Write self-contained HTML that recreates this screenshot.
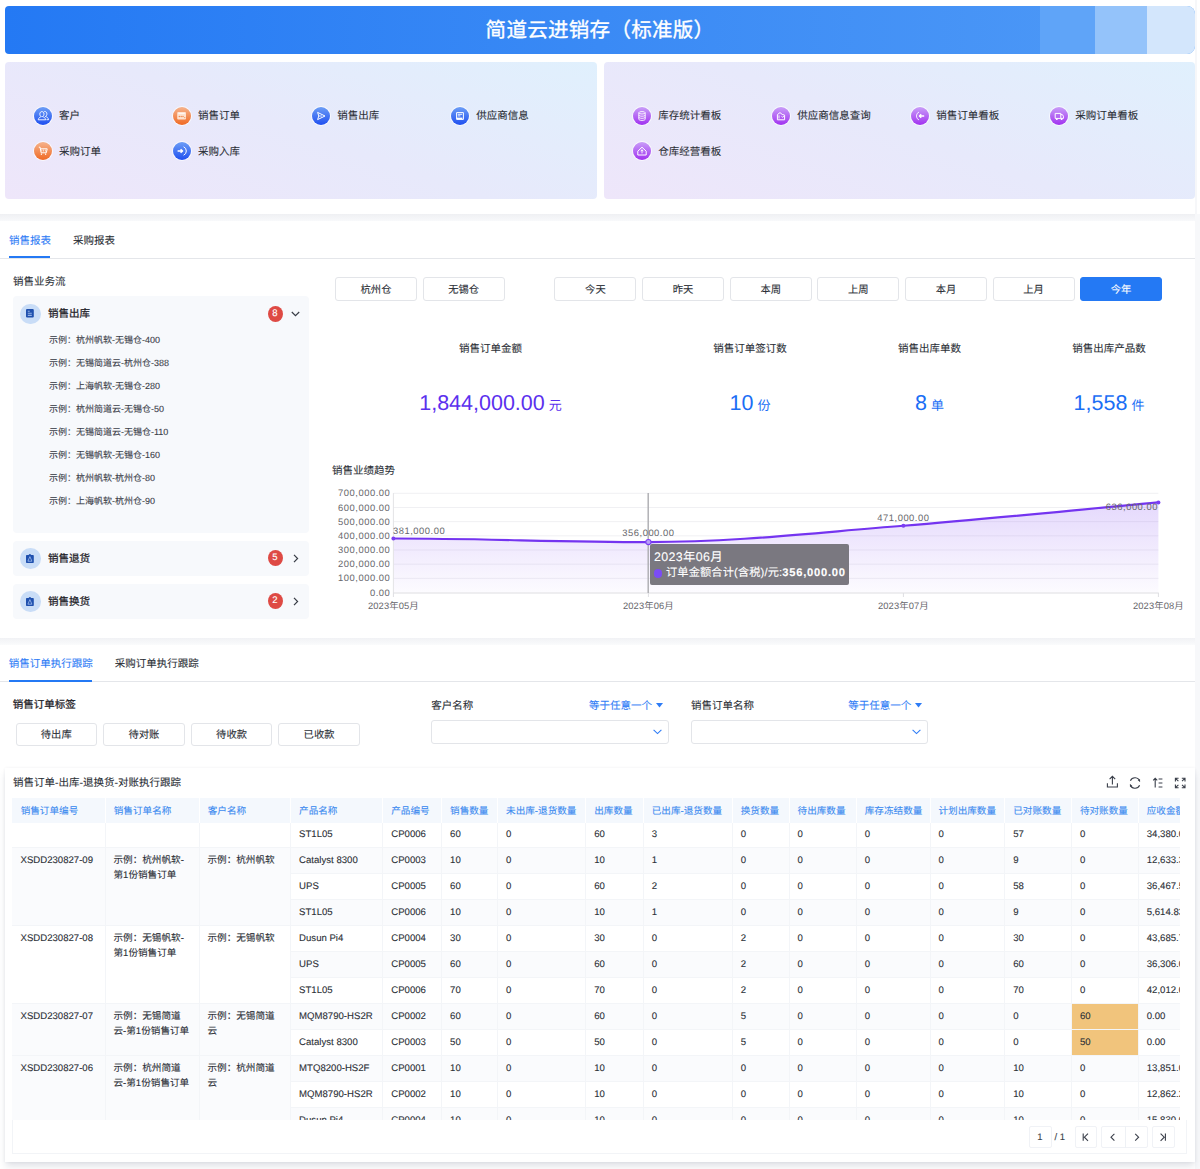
<!DOCTYPE html>
<html lang="zh-CN"><head><meta charset="utf-8"><style>
*{box-sizing:border-box;margin:0;padding:0}
html,body{width:1200px;height:1169px;overflow:hidden;background:#fff}
body{font-family:"Liberation Sans",sans-serif;color:#1f2329;text-rendering:geometricPrecision;position:relative;-webkit-text-stroke:.1px currentColor}
.ab{position:absolute;white-space:nowrap}
.t{position:absolute;white-space:nowrap;line-height:1}
.btn{position:absolute;height:24px;border:1px solid #e3e5e9;border-radius:3px;background:#fff;font-size:10.3px;color:#2b2f36;text-align:center;line-height:22px;padding-top:1.4px}
.qi{position:absolute;width:18px;height:18px;border-radius:50%;box-shadow:0 0 0 1px rgba(255,255,255,.7)}
.qi svg{position:absolute;left:0;top:0}
.ql{position:absolute;font-size:10.5px;color:#2b2f36;line-height:12px;white-space:nowrap}
.blue{background:linear-gradient(180deg,#6d9ef6,#1f4ff0)}
.orange{background:linear-gradient(180deg,#f6b38c,#f06a24)}
.purple{background:linear-gradient(180deg,#c99ef8,#a132f0)}
</style></head><body>
<div class="ab" style="left:5px;top:6px;width:1190px;height:48px;border-radius:4px 8px 8px 4px;overflow:hidden;background:linear-gradient(90deg,#2479f4 0%,#3a8af5 50%,#4f9af7 100%)"><div class="ab" style="left:1035px;top:0;width:55px;height:48px;background:#5fa4f8"></div><div class="ab" style="left:1090px;top:0;width:52px;height:48px;background:#94c3fa"></div><div class="ab" style="left:1142px;top:0;width:48px;height:48px;background:#d3e6fc"></div></div><div class="t" style="left:0;width:1200px;text-align:center;top:20.5px;font-size:20.5px;color:#fff;letter-spacing:0.3px;-webkit-text-stroke:.35px #fff">简道云进销存（标准版）</div><div class="ab" style="left:5px;top:62px;width:592px;height:137px;border-radius:4px;background:linear-gradient(20deg,#eee6fa 0%,#e7e9fb 50%,#e0f0fd 100%)"></div><div class="ab" style="left:604px;top:62px;width:591px;height:137px;border-radius:4px;background:linear-gradient(20deg,#eee6fa 0%,#e7e9fb 50%,#e0f0fd 100%)"></div><div class="qi blue" style="left:33.6px;top:106.5px"><svg width="18" height="18" viewBox="0 0 18 18"><path d="M7.4 9.6c-1.2-.5-1.6-1.5-1.6-2.6 0-1.4.9-2.4 2.1-2.4s2.1 1 2.1 2.4c0 1.1-.4 2.1-1.6 2.6 1.9.4 2.9 1.4 3.3 3.2H4.2c.4-1.8 1.4-2.8 3.2-3.2z" fill="none" stroke="#fff" stroke-width=".9" stroke-linejoin="round"/><path d="M9.9 4.7c.3-.2.6-.2.9-.2 1.2 0 2.1 1 2.1 2.4 0 1.1-.4 2.1-1.6 2.6 1.9.4 2.9 1.4 3.3 3.2h-2.1" fill="none" stroke="#fff" stroke-width=".9" stroke-linejoin="round"/></svg></div><div class="ql" style="left:59.1px;top:109.5px">客户</div><div class="qi orange" style="left:172.6px;top:106.5px"><svg width="18" height="18" viewBox="0 0 18 18"><rect x="4.2" y="5" width="8.8" height="7.4" rx="1" fill="#fde2d0"/><path d="M5.4 6.4h6.4" stroke="#fff" stroke-width=".8"/><circle cx="6.3" cy="9.6" r=".75" fill="#f08a4e"/><circle cx="8.2" cy="9.6" r=".75" fill="#f08a4e"/><circle cx="10" cy="9.6" r=".75" fill="#f08a4e"/><circle cx="11.8" cy="10.6" r=".6" fill="#f08a4e"/></svg></div><div class="ql" style="left:198.1px;top:109.5px">销售订单</div><div class="qi blue" style="left:311.7px;top:106.5px"><svg width="18" height="18" viewBox="0 0 18 18"><path d="M5.6 5.4 13 9 5.6 12.6 6.8 9z" fill="none" stroke="#fff" stroke-width="1" stroke-linejoin="round"/><path d="M6.8 9H10" stroke="#fff" stroke-width=".8"/></svg></div><div class="ql" style="left:337.2px;top:109.5px">销售出库</div><div class="qi blue" style="left:450.7px;top:106.5px"><svg width="18" height="18" viewBox="0 0 18 18"><path d="M5.6 5.6h6.8v6.8H5.6z" fill="none" stroke="#fff" stroke-width="1" stroke-linejoin="round"/><path d="M6.8 7.3h4.4M6.8 8.9h2.6" stroke="#fff" stroke-width=".9"/><path d="M5.8 10.6h5.6v1.6H5.8z" fill="#fff"/></svg></div><div class="ql" style="left:476.2px;top:109.5px">供应商信息</div><div class="qi orange" style="left:33.6px;top:142px"><svg width="18" height="18" viewBox="0 0 18 18"><path d="M4.8 5.2h1.3l1 5.6h5.2l.9-4H6.6" fill="none" stroke="#fff" stroke-width="1" stroke-linejoin="round"/><path d="M7.8 7.6v2M9.6 7.6v2M11.4 7.6v2" stroke="#fff" stroke-width=".7"/><rect x="6.8" y="11.6" width="1.2" height="1.2" fill="#fff"/><rect x="11" y="11.6" width="1.2" height="1.2" fill="#fff"/></svg></div><div class="ql" style="left:59.1px;top:145.7px">采购订单</div><div class="qi blue" style="left:172.6px;top:142px"><svg width="18" height="18" viewBox="0 0 18 18"><path d="M4.6 9h4.6M7.6 7.2 9.6 9l-2 1.8" fill="none" stroke="#fff" stroke-width="1.4" stroke-linejoin="round"/><path d="M10.6 4.8a4.6 4.6 0 0 1 0 8.4" fill="none" stroke="#fff" stroke-width="1"/></svg></div><div class="ql" style="left:198.1px;top:145.7px">采购入库</div><div class="qi purple" style="left:632.7px;top:106.5px"><svg width="18" height="18" viewBox="0 0 18 18"><ellipse cx="9" cy="5.8" rx="3.2" ry="1.2" fill="none" stroke="#fff" stroke-width=".9"/><path d="M5.8 5.8v6.4c0 .7 1.4 1.2 3.2 1.2s3.2-.5 3.2-1.2V5.8M5.8 8c0 .7 1.4 1.2 3.2 1.2s3.2-.5 3.2-1.2M5.8 10.1c0 .7 1.4 1.2 3.2 1.2s3.2-.5 3.2-1.2" fill="none" stroke="#fff" stroke-width=".9"/></svg></div><div class="ql" style="left:658.2px;top:109.5px">库存统计看板</div><div class="qi purple" style="left:771.7px;top:106.5px"><svg width="18" height="18" viewBox="0 0 18 18"><path d="M5.4 12.8V7.6l2.6-2 2.2 1.8 2.4.7v4.7z" fill="none" stroke="#fff" stroke-width="1" stroke-linejoin="round"/><path d="M7 8.4v3.2M9.6 9.4l1 1 1.2-1.4" fill="none" stroke="#fff" stroke-width=".9"/></svg></div><div class="ql" style="left:797.2px;top:109.5px">供应商信息查询</div><div class="qi purple" style="left:910.7px;top:106.5px"><svg width="18" height="18" viewBox="0 0 18 18"><path d="M13.2 9H8.6M10.2 7.2 8.4 9l1.8 1.8" fill="none" stroke="#fff" stroke-width="1.4" stroke-linejoin="round"/><path d="M8 5a4.4 4.4 0 0 0 0 8" fill="none" stroke="#fff" stroke-width="1" opacity=".85"/></svg></div><div class="ql" style="left:936.2px;top:109.5px">销售订单看板</div><div class="qi purple" style="left:1049.7px;top:106.5px"><svg width="18" height="18" viewBox="0 0 18 18"><path d="M5.2 6.4h5.6v5H5.2zM10.8 7.6h1.6l1 1.6v2.2h-2.6" fill="none" stroke="#fff" stroke-width="1" stroke-linejoin="round"/><circle cx="6.8" cy="12.2" r=".9" fill="#fff"/><circle cx="11.6" cy="12.2" r=".9" fill="#fff"/></svg></div><div class="ql" style="left:1075.2px;top:109.5px">采购订单看板</div><div class="qi purple" style="left:632.7px;top:142px"><svg width="18" height="18" viewBox="0 0 18 18"><path d="M4.8 9.2 9 5.2l4.2 4v3.8H4.8z" fill="none" stroke="#fff" stroke-width="1" stroke-linejoin="round"/><path d="M9 7.8v3.6M7.8 9.2 9 7.8l1.2 1.4" fill="none" stroke="#fff" stroke-width=".9"/></svg></div><div class="ql" style="left:658.2px;top:145.7px">仓库经营看板</div><div class="ab" style="left:1195px;top:0;width:1.5px;height:214px;background:#f6f7f9"></div><div class="ab" style="left:0;top:214px;width:1195px;height:7px;background:linear-gradient(180deg,#eff0f3,#f8f9fb)"></div><div class="ab" style="left:1195px;top:214px;width:5px;height:955px;background:#f7f8fa"></div><div class="ab" style="left:0;top:637.5px;width:1195px;height:7.5px;background:linear-gradient(180deg,#f1f2f5,#fafbfc)"></div><div class="t" style="left:9px;top:236px;font-size:10.5px;color:#2e7cf6">销售报表</div><div class="t" style="left:73px;top:236px;font-size:10.5px;color:#2b2f36">采购报表</div><div class="ab" style="left:0;top:258px;width:1195px;height:1px;background:#e4e6ea"></div><div class="ab" style="left:9px;top:256px;width:41px;height:2px;background:#2479f4"></div><div class="t" style="left:13px;top:277px;font-size:10.5px;color:#2b2f36">销售业务流</div><div class="ab" style="left:12.5px;top:296.3px;width:296.5px;height:236.7px;border-radius:4px;background:#f7f9fc"></div><div class="ab" style="left:19.9px;top:303.7px;width:20.7px;height:20.7px;border-radius:50%;background:#c9ddf7"></div><div class="ab" style="left:26.2px;top:309.4px;width:8px;height:9px;line-height:0"><svg width="8" height="9" viewBox="0 0 8 9"><rect x="0" y="0" width="7.8" height="8.6" rx="1.1" fill="#1f50ae"/><path d="M1.8 2.2h1.9M1.8 4.3h4M1.8 6.4h4" stroke="#93b2e8" stroke-width="1.1"/></svg></div><div class="t" style="left:48px;top:309.2px;font-size:10.5px;color:#1f2329;-webkit-text-stroke:.28px #1f2329">销售出库</div><div class="ab" style="left:267.5px;top:306px;width:15px;height:16px;border-radius:50%;background:#de4a44;color:#fff;font-size:9.5px;text-align:center;line-height:16px">8</div><svg class="ab" style="left:291px;top:311px" width="9" height="6" viewBox="0 0 9 6"><path d="M.8 1 4.5 4.6 8.2 1" fill="none" stroke="#373c45" stroke-width="1.2"/></svg><div class="t" style="left:49px;top:335.7px;font-size:9px;color:#3b4049">示例：杭州帆软-无锡仓-400</div><div class="t" style="left:49px;top:358.8px;font-size:9px;color:#3b4049">示例：无锡简道云-杭州仓-388</div><div class="t" style="left:49px;top:381.9px;font-size:9px;color:#3b4049">示例：上海帆软-无锡仓-280</div><div class="t" style="left:49px;top:404.9px;font-size:9px;color:#3b4049">示例：杭州简道云-无锡仓-50</div><div class="t" style="left:49px;top:428.0px;font-size:9px;color:#3b4049">示例：无锡简道云-无锡仓-110</div><div class="t" style="left:49px;top:451.1px;font-size:9px;color:#3b4049">示例：无锡帆软-无锡仓-160</div><div class="t" style="left:49px;top:474.2px;font-size:9px;color:#3b4049">示例：杭州帆软-杭州仓-80</div><div class="t" style="left:49px;top:497.3px;font-size:9px;color:#3b4049">示例：上海帆软-杭州仓-90</div><div class="ab" style="left:12.5px;top:540.7px;width:296.5px;height:35.3px;border-radius:4px;background:#f7f9fc"></div><div class="ab" style="left:19.9px;top:548.1px;width:20.7px;height:20.7px;border-radius:50%;background:#c9ddf7"></div><div class="ab" style="left:26.2px;top:553.8px;width:8px;height:9px;line-height:0"><svg width="8" height="9" viewBox="0 0 8 9"><path d="M1 .9h1.6C3 .3 3.5 0 3.9 0s.9.3 1.3.9h1.6c.6 0 1 .4 1 1v6c0 .6-.4 1-1 1H1c-.6 0-1-.4-1-1v-6c0-.6.4-1 1-1z" fill="#1f50ae"/><path d="M3.9 2.6 5.9 7.2H1.9z" fill="none" stroke="#93b2e8" stroke-width=".9"/></svg></div><div class="t" style="left:48px;top:553.6px;font-size:10.5px;color:#1f2329;-webkit-text-stroke:.28px #1f2329">销售退货</div><div class="ab" style="left:267.5px;top:550.4px;width:15px;height:16px;border-radius:50%;background:#de4a44;color:#fff;font-size:9.5px;text-align:center;line-height:16px">5</div><svg class="ab" style="left:293px;top:553.9px" width="6" height="9" viewBox="0 0 6 9"><path d="M1 .8 4.6 4.5 1 8.2" fill="none" stroke="#373c45" stroke-width="1.2"/></svg><div class="ab" style="left:12.5px;top:583.7px;width:296.5px;height:35.3px;border-radius:4px;background:#f7f9fc"></div><div class="ab" style="left:19.9px;top:591.1px;width:20.7px;height:20.7px;border-radius:50%;background:#c9ddf7"></div><div class="ab" style="left:26.2px;top:596.8px;width:8px;height:9px;line-height:0"><svg width="8" height="9" viewBox="0 0 8 9"><path d="M1 .9h1.6C3 .3 3.5 0 3.9 0s.9.3 1.3.9h1.6c.6 0 1 .4 1 1v6c0 .6-.4 1-1 1H1c-.6 0-1-.4-1-1v-6c0-.6.4-1 1-1z" fill="#1f50ae"/><path d="M3.9 2.6 5.9 7.2H1.9z" fill="none" stroke="#93b2e8" stroke-width=".9"/></svg></div><div class="t" style="left:48px;top:596.6px;font-size:10.5px;color:#1f2329;-webkit-text-stroke:.28px #1f2329">销售换货</div><div class="ab" style="left:267.5px;top:593.4px;width:15px;height:16px;border-radius:50%;background:#de4a44;color:#fff;font-size:9.5px;text-align:center;line-height:16px">2</div><svg class="ab" style="left:293px;top:596.9px" width="6" height="9" viewBox="0 0 6 9"><path d="M1 .8 4.6 4.5 1 8.2" fill="none" stroke="#373c45" stroke-width="1.2"/></svg><div class="btn" style="left:335px;top:277.4px;width:82px">杭州仓</div><div class="btn" style="left:422.6px;top:277.4px;width:82px">无锡仓</div><div class="btn" style="left:554.4px;top:277.4px;width:82px">今天</div><div class="btn" style="left:642px;top:277.4px;width:82px">昨天</div><div class="btn" style="left:729.7px;top:277.4px;width:82px">本周</div><div class="btn" style="left:817.3px;top:277.4px;width:82px">上周</div><div class="btn" style="left:905px;top:277.4px;width:82px">本月</div><div class="btn" style="left:992.6px;top:277.4px;width:82px">上月</div><div class="btn" style="left:1080px;top:277.4px;width:82px;background:#2479f4;border-color:#2479f4;color:#fff">今年</div><div class="t" style="left:390.5px;width:200px;text-align:center;top:344px;font-size:10.5px;color:#2b2f36">销售订单金额</div><div class="t" style="left:340.5px;width:300px;text-align:center;top:393px;font-size:21.5px;color:#5b30ee;-webkit-text-stroke:0">1,844,000.00<span style="font-size:13px;margin-left:4px">元</span></div><div class="t" style="left:650px;width:200px;text-align:center;top:344px;font-size:10.5px;color:#2b2f36">销售订单签订数</div><div class="t" style="left:600px;width:300px;text-align:center;top:393px;font-size:21.5px;color:#1a6ef5;-webkit-text-stroke:0">10<span style="font-size:13px;margin-left:4px">份</span></div><div class="t" style="left:829.5px;width:200px;text-align:center;top:344px;font-size:10.5px;color:#2b2f36">销售出库单数</div><div class="t" style="left:779.5px;width:300px;text-align:center;top:393px;font-size:21.5px;color:#1a6ef5;-webkit-text-stroke:0">8<span style="font-size:13px;margin-left:4px">单</span></div><div class="t" style="left:1009px;width:200px;text-align:center;top:344px;font-size:10.5px;color:#2b2f36">销售出库产品数</div><div class="t" style="left:959px;width:300px;text-align:center;top:393px;font-size:21.5px;color:#1a6ef5;-webkit-text-stroke:0">1,558<span style="font-size:13px;margin-left:4px">件</span></div><div class="t" style="left:332px;top:466px;font-size:10.5px;color:#2b2f36">销售业绩趋势</div><svg class="ab" style="left:0;top:0" width="1200" height="640" viewBox="0 0 1200 640"><defs><linearGradient id="ag" x1="0" y1="0" x2="0" y2="1"><stop offset="0" stop-color="#7b3ff2" stop-opacity=".2"/><stop offset="1" stop-color="#7b3ff2" stop-opacity=".02"/></linearGradient></defs><line x1="393.4" y1="578.33" x2="1158.4" y2="578.33" stroke="#f0f0f3" stroke-width="1"/><line x1="393.4" y1="564.16" x2="1158.4" y2="564.16" stroke="#f0f0f3" stroke-width="1"/><line x1="393.4" y1="549.99" x2="1158.4" y2="549.99" stroke="#f0f0f3" stroke-width="1"/><line x1="393.4" y1="535.82" x2="1158.4" y2="535.82" stroke="#f0f0f3" stroke-width="1"/><line x1="393.4" y1="521.65" x2="1158.4" y2="521.65" stroke="#f0f0f3" stroke-width="1"/><line x1="393.4" y1="507.48" x2="1158.4" y2="507.48" stroke="#f0f0f3" stroke-width="1"/><line x1="393.4" y1="493.31" x2="1158.4" y2="493.31" stroke="#f0f0f3" stroke-width="1"/><path d="M393.4,538.51 C482.6,538.51 559.1,542.05 648.4,542.05 C737.6,542.05 814.1,532.70 903.4,525.76 C992.6,518.82 1069.2,510.56 1158.4,502.38 L1158.4,592.5 L393.4,592.5 Z" fill="url(#ag)"/><line x1="393.4" y1="493" x2="393.4" y2="593" stroke="#e3e3e6" stroke-width="1"/><line x1="393" y1="593" x2="1158.8" y2="593" stroke="#dedee2" stroke-width="1.2"/><line x1="393.4" y1="593" x2="393.4" y2="597" stroke="#dedee2" stroke-width="1"/><line x1="648.4" y1="593" x2="648.4" y2="597" stroke="#dedee2" stroke-width="1"/><line x1="903.4" y1="593" x2="903.4" y2="597" stroke="#dedee2" stroke-width="1"/><line x1="1158.4" y1="593" x2="1158.4" y2="597" stroke="#dedee2" stroke-width="1"/><line x1="648.2" y1="493" x2="648.2" y2="593" stroke="#acacb0" stroke-width="1.4"/><path d="M393.4,538.51 C482.6,538.51 559.1,542.05 648.4,542.05 C737.6,542.05 814.1,532.70 903.4,525.76 C992.6,518.82 1069.2,510.56 1158.4,502.38" fill="none" stroke="#7434f0" stroke-width="2.2"/><circle cx="393.4" cy="538.51" r="2" fill="#7b3ff2"/><circle cx="903.4" cy="525.76" r="2" fill="#7b3ff2"/><circle cx="1158.4" cy="502.38" r="2" fill="#7b3ff2"/><circle cx="648.4" cy="542.05" r="2.6" fill="#b9a0f7" stroke="#7b3ff2" stroke-width="1.1"/></svg><div class="t" style="left:290.3px;width:100px;text-align:right;top:587.5px;font-size:9.4px;letter-spacing:.53px;color:#66666b;-webkit-text-stroke:0">0.00</div><div class="t" style="left:290.3px;width:100px;text-align:right;top:573.3px;font-size:9.4px;letter-spacing:.53px;color:#66666b;-webkit-text-stroke:0">100,000.00</div><div class="t" style="left:290.3px;width:100px;text-align:right;top:559.2px;font-size:9.4px;letter-spacing:.53px;color:#66666b;-webkit-text-stroke:0">200,000.00</div><div class="t" style="left:290.3px;width:100px;text-align:right;top:545.0px;font-size:9.4px;letter-spacing:.53px;color:#66666b;-webkit-text-stroke:0">300,000.00</div><div class="t" style="left:290.3px;width:100px;text-align:right;top:530.8px;font-size:9.4px;letter-spacing:.53px;color:#66666b;-webkit-text-stroke:0">400,000.00</div><div class="t" style="left:290.3px;width:100px;text-align:right;top:516.6px;font-size:9.4px;letter-spacing:.53px;color:#66666b;-webkit-text-stroke:0">500,000.00</div><div class="t" style="left:290.3px;width:100px;text-align:right;top:502.5px;font-size:9.4px;letter-spacing:.53px;color:#66666b;-webkit-text-stroke:0">600,000.00</div><div class="t" style="left:290.3px;width:100px;text-align:right;top:488.3px;font-size:9.4px;letter-spacing:.53px;color:#66666b;-webkit-text-stroke:0">700,000.00</div><div class="t" style="left:353.4px;width:80px;text-align:center;top:601.2px;font-size:9.4px;letter-spacing:.1px;color:#66666b;-webkit-text-stroke:0">2023年05月</div><div class="t" style="left:608.4px;width:80px;text-align:center;top:601.2px;font-size:9.4px;letter-spacing:.1px;color:#66666b;-webkit-text-stroke:0">2023年06月</div><div class="t" style="left:863.4px;width:80px;text-align:center;top:601.2px;font-size:9.4px;letter-spacing:.1px;color:#66666b;-webkit-text-stroke:0">2023年07月</div><div class="t" style="left:1118.4px;width:80px;text-align:center;top:601.2px;font-size:9.4px;letter-spacing:.1px;color:#66666b;-webkit-text-stroke:0">2023年08月</div><div class="t" style="left:393px;top:526px;font-size:9.4px;letter-spacing:.53px;color:#66666b;-webkit-text-stroke:0">381,000.00</div><div class="t" style="left:598.4px;width:100px;text-align:center;top:527.8px;font-size:9.4px;letter-spacing:.53px;color:#66666b;-webkit-text-stroke:0">356,000.00</div><div class="t" style="left:853.4px;width:100px;text-align:center;top:513px;font-size:9.4px;letter-spacing:.53px;color:#66666b;-webkit-text-stroke:0">471,000.00</div><div class="t" style="left:1058px;width:100px;text-align:right;top:501.8px;font-size:9.4px;letter-spacing:.53px;color:#66666b;-webkit-text-stroke:0">636,000.00</div><div class="ab" style="left:650.3px;top:544.2px;width:198.5px;height:40.5px;border-radius:2px;background:#7a7880"></div><div class="t" style="left:654px;top:550.5px;font-size:12.4px;letter-spacing:.35px;color:#fff">2023年06月</div><div class="ab" style="left:653.7px;top:569px;width:8.6px;height:8.6px;border-radius:50%;background:#7b4cf5"></div><div class="t" style="left:666px;top:567.6px;font-size:11.2px;color:#fff;letter-spacing:.15px">订单金额合计(含税)/元:<b style="letter-spacing:.75px">356,000.00</b></div><div class="t" style="left:8.8px;top:659.2px;font-size:10.5px;color:#2e7cf6">销售订单执行跟踪</div><div class="t" style="left:114.7px;top:659.2px;font-size:10.5px;color:#2b2f36">采购订单执行跟踪</div><div class="ab" style="left:0;top:681.3px;width:1195px;height:1px;background:#e4e6ea"></div><div class="ab" style="left:8.8px;top:679.5px;width:83px;height:2px;background:#2479f4"></div><div class="t" style="left:12.8px;top:699.7px;font-size:10.5px;color:#1f2329;-webkit-text-stroke:.28px #1f2329">销售订单标签</div><div class="btn" style="left:15.6px;top:722.7px;width:81.3px;height:23.7px;line-height:21.3px">待出库</div><div class="btn" style="left:103.3px;top:722.7px;width:81.3px;height:23.7px;line-height:21.3px">待对账</div><div class="btn" style="left:190.9px;top:722.7px;width:81.3px;height:23.7px;line-height:21.3px">待收款</div><div class="btn" style="left:278.4px;top:722.7px;width:81.3px;height:23.7px;line-height:21.3px">已收款</div><div class="t" style="left:431.3px;top:700.8px;font-size:10.5px;color:#2b2f36">客户名称</div><div class="t" style="left:589.1px;width:61px;text-align:right;top:700.8px;font-size:10.5px;color:#2e7cf6">等于任意一个</div><svg class="ab" style="left:656.3000000000001px;top:703px" width="7" height="5" viewBox="0 0 7 5"><path d="M0 0h7L3.5 4.5z" fill="#2e7cf6"/></svg><div class="ab" style="left:431.3px;top:720px;width:237.8px;height:23.8px;border:1px solid #e3e5e9;border-radius:3px;background:#fff"></div><svg class="ab" style="left:652.9px;top:728.6px" width="9" height="6" viewBox="0 0 9 6"><path d="M.6 .8 4.5 4.6 8.4 .8" fill="none" stroke="#2e7cf6" stroke-width="1.1"/></svg><div class="t" style="left:691px;top:700.8px;font-size:10.5px;color:#2b2f36">销售订单名称</div><div class="t" style="left:848.2px;width:61px;text-align:right;top:700.8px;font-size:10.5px;color:#2e7cf6">等于任意一个</div><svg class="ab" style="left:915.4000000000001px;top:703px" width="7" height="5" viewBox="0 0 7 5"><path d="M0 0h7L3.5 4.5z" fill="#2e7cf6"/></svg><div class="ab" style="left:691px;top:720px;width:237.2px;height:23.8px;border:1px solid #e3e5e9;border-radius:3px;background:#fff"></div><svg class="ab" style="left:912.0px;top:728.6px" width="9" height="6" viewBox="0 0 9 6"><path d="M.6 .8 4.5 4.6 8.4 .8" fill="none" stroke="#2e7cf6" stroke-width="1.1"/></svg><div class="ab" style="left:5px;top:767.5px;width:1190px;height:394.5px;background:#fff;box-shadow:0 5px 7px -1px rgba(30,40,80,.14),0 0 3px rgba(30,40,80,.06)"></div><div class="t" style="left:13px;top:777.7px;font-size:10.5px;color:#2b2f36">销售订单-出库-退换货-对账执行跟踪</div><svg class="ab" style="left:1100px;top:774px" width="90" height="17" viewBox="1100 774 90 17"><g fill="none" stroke="#3a3f4a" stroke-width="1.1"><path d="M1107.4 783.2v3.8h10v-3.8M1112.4 784.5v-7.8M1109.6 779.2l2.8-2.8 2.8 2.8"/><path d="M1139.8 781.5a5 5 0 0 0-9.4-.8M1130.2 784.5a5 5 0 0 0 9.4.8"/><path d="M1155.2 787.5v-9.2M1153.2 780.4l2-2.2 2 2.2M1158.6 779h3.8M1158.6 783h3.8M1158.6 787h3.8"/><path d="M1175.4 781.4v-3.2h3.2M1185 781.4v-3.2h-3.2M1175.4 784.6v3.2h3.2M1185 784.6v3.2h-3.2M1176 778.8l2.4 2.4M1184.4 778.8l-2.4 2.4M1176 787.2l2.4-2.4M1184.4 787.2l-2.4-2.4"/></g><path d="M1139.8 781.5l.3-2.6-2.4 1.4zM1130.2 784.5l-.3 2.6 2.4-1.4z" fill="#3a3f4a"/></svg><div class="ab" style="left:12.4px;top:798px;width:1167.6px;height:321.5px;overflow:hidden"><div class="ab" style="left:278.40000000000003px;top:23px;width:929.2px;height:26px;background:#ffffff;border-top:1px solid #f3f5f8"></div><div class="t" style="left:286.7px;top:32.2px;font-size:9.6px;color:#2b2f36">ST1L05</div><div class="t" style="left:378.9px;top:32.2px;font-size:9.6px;color:#2b2f36">CP0006</div><div class="t" style="left:437.7px;top:32.2px;font-size:9.6px;color:#2b2f36">60</div><div class="t" style="left:493.7px;top:32.2px;font-size:9.6px;color:#2b2f36">0</div><div class="t" style="left:581.9px;top:32.2px;font-size:9.6px;color:#2b2f36">60</div><div class="t" style="left:639.4px;top:32.2px;font-size:9.6px;color:#2b2f36">3</div><div class="t" style="left:728.4px;top:32.2px;font-size:9.6px;color:#2b2f36">0</div><div class="t" style="left:785.2px;top:32.2px;font-size:9.6px;color:#2b2f36">0</div><div class="t" style="left:852.4px;top:32.2px;font-size:9.6px;color:#2b2f36">0</div><div class="t" style="left:926.1px;top:32.2px;font-size:9.6px;color:#2b2f36">0</div><div class="t" style="left:1000.9px;top:32.2px;font-size:9.6px;color:#2b2f36">57</div><div class="t" style="left:1067.5px;top:32.2px;font-size:9.6px;color:#2b2f36">0</div><div class="t" style="left:1134.4px;top:32.2px;font-size:9.6px;color:#2b2f36">34,380.00</div><div class="ab" style="left:278.40000000000003px;top:49px;width:929.2px;height:26px;background:#fafbfd;border-top:1px solid #f3f5f8"></div><div class="t" style="left:286.7px;top:58.2px;font-size:9.6px;color:#2b2f36">Catalyst 8300</div><div class="t" style="left:378.9px;top:58.2px;font-size:9.6px;color:#2b2f36">CP0003</div><div class="t" style="left:437.7px;top:58.2px;font-size:9.6px;color:#2b2f36">10</div><div class="t" style="left:493.7px;top:58.2px;font-size:9.6px;color:#2b2f36">0</div><div class="t" style="left:581.9px;top:58.2px;font-size:9.6px;color:#2b2f36">10</div><div class="t" style="left:639.4px;top:58.2px;font-size:9.6px;color:#2b2f36">1</div><div class="t" style="left:728.4px;top:58.2px;font-size:9.6px;color:#2b2f36">0</div><div class="t" style="left:785.2px;top:58.2px;font-size:9.6px;color:#2b2f36">0</div><div class="t" style="left:852.4px;top:58.2px;font-size:9.6px;color:#2b2f36">0</div><div class="t" style="left:926.1px;top:58.2px;font-size:9.6px;color:#2b2f36">0</div><div class="t" style="left:1000.9px;top:58.2px;font-size:9.6px;color:#2b2f36">9</div><div class="t" style="left:1067.5px;top:58.2px;font-size:9.6px;color:#2b2f36">0</div><div class="t" style="left:1134.4px;top:58.2px;font-size:9.6px;color:#2b2f36">12,633.33</div><div class="ab" style="left:278.40000000000003px;top:75px;width:929.2px;height:26px;background:#ffffff;border-top:1px solid #f3f5f8"></div><div class="t" style="left:286.7px;top:84.2px;font-size:9.6px;color:#2b2f36">UPS</div><div class="t" style="left:378.9px;top:84.2px;font-size:9.6px;color:#2b2f36">CP0005</div><div class="t" style="left:437.7px;top:84.2px;font-size:9.6px;color:#2b2f36">60</div><div class="t" style="left:493.7px;top:84.2px;font-size:9.6px;color:#2b2f36">0</div><div class="t" style="left:581.9px;top:84.2px;font-size:9.6px;color:#2b2f36">60</div><div class="t" style="left:639.4px;top:84.2px;font-size:9.6px;color:#2b2f36">2</div><div class="t" style="left:728.4px;top:84.2px;font-size:9.6px;color:#2b2f36">0</div><div class="t" style="left:785.2px;top:84.2px;font-size:9.6px;color:#2b2f36">0</div><div class="t" style="left:852.4px;top:84.2px;font-size:9.6px;color:#2b2f36">0</div><div class="t" style="left:926.1px;top:84.2px;font-size:9.6px;color:#2b2f36">0</div><div class="t" style="left:1000.9px;top:84.2px;font-size:9.6px;color:#2b2f36">58</div><div class="t" style="left:1067.5px;top:84.2px;font-size:9.6px;color:#2b2f36">0</div><div class="t" style="left:1134.4px;top:84.2px;font-size:9.6px;color:#2b2f36">36,467.50</div><div class="ab" style="left:278.40000000000003px;top:101px;width:929.2px;height:26px;background:#fafbfd;border-top:1px solid #f3f5f8"></div><div class="t" style="left:286.7px;top:110.2px;font-size:9.6px;color:#2b2f36">ST1L05</div><div class="t" style="left:378.9px;top:110.2px;font-size:9.6px;color:#2b2f36">CP0006</div><div class="t" style="left:437.7px;top:110.2px;font-size:9.6px;color:#2b2f36">10</div><div class="t" style="left:493.7px;top:110.2px;font-size:9.6px;color:#2b2f36">0</div><div class="t" style="left:581.9px;top:110.2px;font-size:9.6px;color:#2b2f36">10</div><div class="t" style="left:639.4px;top:110.2px;font-size:9.6px;color:#2b2f36">1</div><div class="t" style="left:728.4px;top:110.2px;font-size:9.6px;color:#2b2f36">0</div><div class="t" style="left:785.2px;top:110.2px;font-size:9.6px;color:#2b2f36">0</div><div class="t" style="left:852.4px;top:110.2px;font-size:9.6px;color:#2b2f36">0</div><div class="t" style="left:926.1px;top:110.2px;font-size:9.6px;color:#2b2f36">0</div><div class="t" style="left:1000.9px;top:110.2px;font-size:9.6px;color:#2b2f36">9</div><div class="t" style="left:1067.5px;top:110.2px;font-size:9.6px;color:#2b2f36">0</div><div class="t" style="left:1134.4px;top:110.2px;font-size:9.6px;color:#2b2f36">5,614.83</div><div class="ab" style="left:278.40000000000003px;top:127px;width:929.2px;height:26px;background:#ffffff;border-top:1px solid #f3f5f8"></div><div class="t" style="left:286.7px;top:136.2px;font-size:9.6px;color:#2b2f36">Dusun Pi4</div><div class="t" style="left:378.9px;top:136.2px;font-size:9.6px;color:#2b2f36">CP0004</div><div class="t" style="left:437.7px;top:136.2px;font-size:9.6px;color:#2b2f36">30</div><div class="t" style="left:493.7px;top:136.2px;font-size:9.6px;color:#2b2f36">0</div><div class="t" style="left:581.9px;top:136.2px;font-size:9.6px;color:#2b2f36">30</div><div class="t" style="left:639.4px;top:136.2px;font-size:9.6px;color:#2b2f36">0</div><div class="t" style="left:728.4px;top:136.2px;font-size:9.6px;color:#2b2f36">2</div><div class="t" style="left:785.2px;top:136.2px;font-size:9.6px;color:#2b2f36">0</div><div class="t" style="left:852.4px;top:136.2px;font-size:9.6px;color:#2b2f36">0</div><div class="t" style="left:926.1px;top:136.2px;font-size:9.6px;color:#2b2f36">0</div><div class="t" style="left:1000.9px;top:136.2px;font-size:9.6px;color:#2b2f36">30</div><div class="t" style="left:1067.5px;top:136.2px;font-size:9.6px;color:#2b2f36">0</div><div class="t" style="left:1134.4px;top:136.2px;font-size:9.6px;color:#2b2f36">43,685.70</div><div class="ab" style="left:278.40000000000003px;top:153px;width:929.2px;height:26px;background:#fafbfd;border-top:1px solid #f3f5f8"></div><div class="t" style="left:286.7px;top:162.2px;font-size:9.6px;color:#2b2f36">UPS</div><div class="t" style="left:378.9px;top:162.2px;font-size:9.6px;color:#2b2f36">CP0005</div><div class="t" style="left:437.7px;top:162.2px;font-size:9.6px;color:#2b2f36">60</div><div class="t" style="left:493.7px;top:162.2px;font-size:9.6px;color:#2b2f36">0</div><div class="t" style="left:581.9px;top:162.2px;font-size:9.6px;color:#2b2f36">60</div><div class="t" style="left:639.4px;top:162.2px;font-size:9.6px;color:#2b2f36">0</div><div class="t" style="left:728.4px;top:162.2px;font-size:9.6px;color:#2b2f36">2</div><div class="t" style="left:785.2px;top:162.2px;font-size:9.6px;color:#2b2f36">0</div><div class="t" style="left:852.4px;top:162.2px;font-size:9.6px;color:#2b2f36">0</div><div class="t" style="left:926.1px;top:162.2px;font-size:9.6px;color:#2b2f36">0</div><div class="t" style="left:1000.9px;top:162.2px;font-size:9.6px;color:#2b2f36">60</div><div class="t" style="left:1067.5px;top:162.2px;font-size:9.6px;color:#2b2f36">0</div><div class="t" style="left:1134.4px;top:162.2px;font-size:9.6px;color:#2b2f36">36,306.00</div><div class="ab" style="left:278.40000000000003px;top:179px;width:929.2px;height:26px;background:#ffffff;border-top:1px solid #f3f5f8"></div><div class="t" style="left:286.7px;top:188.2px;font-size:9.6px;color:#2b2f36">ST1L05</div><div class="t" style="left:378.9px;top:188.2px;font-size:9.6px;color:#2b2f36">CP0006</div><div class="t" style="left:437.7px;top:188.2px;font-size:9.6px;color:#2b2f36">70</div><div class="t" style="left:493.7px;top:188.2px;font-size:9.6px;color:#2b2f36">0</div><div class="t" style="left:581.9px;top:188.2px;font-size:9.6px;color:#2b2f36">70</div><div class="t" style="left:639.4px;top:188.2px;font-size:9.6px;color:#2b2f36">0</div><div class="t" style="left:728.4px;top:188.2px;font-size:9.6px;color:#2b2f36">2</div><div class="t" style="left:785.2px;top:188.2px;font-size:9.6px;color:#2b2f36">0</div><div class="t" style="left:852.4px;top:188.2px;font-size:9.6px;color:#2b2f36">0</div><div class="t" style="left:926.1px;top:188.2px;font-size:9.6px;color:#2b2f36">0</div><div class="t" style="left:1000.9px;top:188.2px;font-size:9.6px;color:#2b2f36">70</div><div class="t" style="left:1067.5px;top:188.2px;font-size:9.6px;color:#2b2f36">0</div><div class="t" style="left:1134.4px;top:188.2px;font-size:9.6px;color:#2b2f36">42,012.00</div><div class="ab" style="left:278.40000000000003px;top:205px;width:929.2px;height:26px;background:#fafbfd;border-top:1px solid #f3f5f8"></div><div class="t" style="left:286.7px;top:214.2px;font-size:9.6px;color:#2b2f36">MQM8790-HS2R</div><div class="t" style="left:378.9px;top:214.2px;font-size:9.6px;color:#2b2f36">CP0002</div><div class="t" style="left:437.7px;top:214.2px;font-size:9.6px;color:#2b2f36">60</div><div class="t" style="left:493.7px;top:214.2px;font-size:9.6px;color:#2b2f36">0</div><div class="t" style="left:581.9px;top:214.2px;font-size:9.6px;color:#2b2f36">60</div><div class="t" style="left:639.4px;top:214.2px;font-size:9.6px;color:#2b2f36">0</div><div class="t" style="left:728.4px;top:214.2px;font-size:9.6px;color:#2b2f36">5</div><div class="t" style="left:785.2px;top:214.2px;font-size:9.6px;color:#2b2f36">0</div><div class="t" style="left:852.4px;top:214.2px;font-size:9.6px;color:#2b2f36">0</div><div class="t" style="left:926.1px;top:214.2px;font-size:9.6px;color:#2b2f36">0</div><div class="t" style="left:1000.9px;top:214.2px;font-size:9.6px;color:#2b2f36">0</div><div class="t" style="left:1067.5px;top:214.2px;font-size:9.6px;color:#2b2f36">60</div><div class="t" style="left:1134.4px;top:214.2px;font-size:9.6px;color:#2b2f36">0.00</div><div class="ab" style="left:278.40000000000003px;top:231px;width:929.2px;height:26px;background:#ffffff;border-top:1px solid #f3f5f8"></div><div class="t" style="left:286.7px;top:240.2px;font-size:9.6px;color:#2b2f36">Catalyst 8300</div><div class="t" style="left:378.9px;top:240.2px;font-size:9.6px;color:#2b2f36">CP0003</div><div class="t" style="left:437.7px;top:240.2px;font-size:9.6px;color:#2b2f36">50</div><div class="t" style="left:493.7px;top:240.2px;font-size:9.6px;color:#2b2f36">0</div><div class="t" style="left:581.9px;top:240.2px;font-size:9.6px;color:#2b2f36">50</div><div class="t" style="left:639.4px;top:240.2px;font-size:9.6px;color:#2b2f36">0</div><div class="t" style="left:728.4px;top:240.2px;font-size:9.6px;color:#2b2f36">5</div><div class="t" style="left:785.2px;top:240.2px;font-size:9.6px;color:#2b2f36">0</div><div class="t" style="left:852.4px;top:240.2px;font-size:9.6px;color:#2b2f36">0</div><div class="t" style="left:926.1px;top:240.2px;font-size:9.6px;color:#2b2f36">0</div><div class="t" style="left:1000.9px;top:240.2px;font-size:9.6px;color:#2b2f36">0</div><div class="t" style="left:1067.5px;top:240.2px;font-size:9.6px;color:#2b2f36">50</div><div class="t" style="left:1134.4px;top:240.2px;font-size:9.6px;color:#2b2f36">0.00</div><div class="ab" style="left:278.40000000000003px;top:257px;width:929.2px;height:26px;background:#fafbfd;border-top:1px solid #f3f5f8"></div><div class="t" style="left:286.7px;top:266.2px;font-size:9.6px;color:#2b2f36">MTQ8200-HS2F</div><div class="t" style="left:378.9px;top:266.2px;font-size:9.6px;color:#2b2f36">CP0001</div><div class="t" style="left:437.7px;top:266.2px;font-size:9.6px;color:#2b2f36">10</div><div class="t" style="left:493.7px;top:266.2px;font-size:9.6px;color:#2b2f36">0</div><div class="t" style="left:581.9px;top:266.2px;font-size:9.6px;color:#2b2f36">10</div><div class="t" style="left:639.4px;top:266.2px;font-size:9.6px;color:#2b2f36">0</div><div class="t" style="left:728.4px;top:266.2px;font-size:9.6px;color:#2b2f36">0</div><div class="t" style="left:785.2px;top:266.2px;font-size:9.6px;color:#2b2f36">0</div><div class="t" style="left:852.4px;top:266.2px;font-size:9.6px;color:#2b2f36">0</div><div class="t" style="left:926.1px;top:266.2px;font-size:9.6px;color:#2b2f36">0</div><div class="t" style="left:1000.9px;top:266.2px;font-size:9.6px;color:#2b2f36">10</div><div class="t" style="left:1067.5px;top:266.2px;font-size:9.6px;color:#2b2f36">0</div><div class="t" style="left:1134.4px;top:266.2px;font-size:9.6px;color:#2b2f36">13,851.00</div><div class="ab" style="left:278.40000000000003px;top:283px;width:929.2px;height:26px;background:#ffffff;border-top:1px solid #f3f5f8"></div><div class="t" style="left:286.7px;top:292.2px;font-size:9.6px;color:#2b2f36">MQM8790-HS2R</div><div class="t" style="left:378.9px;top:292.2px;font-size:9.6px;color:#2b2f36">CP0002</div><div class="t" style="left:437.7px;top:292.2px;font-size:9.6px;color:#2b2f36">10</div><div class="t" style="left:493.7px;top:292.2px;font-size:9.6px;color:#2b2f36">0</div><div class="t" style="left:581.9px;top:292.2px;font-size:9.6px;color:#2b2f36">10</div><div class="t" style="left:639.4px;top:292.2px;font-size:9.6px;color:#2b2f36">0</div><div class="t" style="left:728.4px;top:292.2px;font-size:9.6px;color:#2b2f36">0</div><div class="t" style="left:785.2px;top:292.2px;font-size:9.6px;color:#2b2f36">0</div><div class="t" style="left:852.4px;top:292.2px;font-size:9.6px;color:#2b2f36">0</div><div class="t" style="left:926.1px;top:292.2px;font-size:9.6px;color:#2b2f36">0</div><div class="t" style="left:1000.9px;top:292.2px;font-size:9.6px;color:#2b2f36">10</div><div class="t" style="left:1067.5px;top:292.2px;font-size:9.6px;color:#2b2f36">0</div><div class="t" style="left:1134.4px;top:292.2px;font-size:9.6px;color:#2b2f36">12,862.20</div><div class="ab" style="left:278.40000000000003px;top:309px;width:929.2px;height:26px;background:#fafbfd;border-top:1px solid #f3f5f8"></div><div class="t" style="left:286.7px;top:318.2px;font-size:9.6px;color:#2b2f36">Dusun Pi4</div><div class="t" style="left:378.9px;top:318.2px;font-size:9.6px;color:#2b2f36">CP0004</div><div class="t" style="left:437.7px;top:318.2px;font-size:9.6px;color:#2b2f36">10</div><div class="t" style="left:493.7px;top:318.2px;font-size:9.6px;color:#2b2f36">0</div><div class="t" style="left:581.9px;top:318.2px;font-size:9.6px;color:#2b2f36">10</div><div class="t" style="left:639.4px;top:318.2px;font-size:9.6px;color:#2b2f36">0</div><div class="t" style="left:728.4px;top:318.2px;font-size:9.6px;color:#2b2f36">0</div><div class="t" style="left:785.2px;top:318.2px;font-size:9.6px;color:#2b2f36">0</div><div class="t" style="left:852.4px;top:318.2px;font-size:9.6px;color:#2b2f36">0</div><div class="t" style="left:926.1px;top:318.2px;font-size:9.6px;color:#2b2f36">0</div><div class="t" style="left:1000.9px;top:318.2px;font-size:9.6px;color:#2b2f36">10</div><div class="t" style="left:1067.5px;top:318.2px;font-size:9.6px;color:#2b2f36">0</div><div class="t" style="left:1134.4px;top:318.2px;font-size:9.6px;color:#2b2f36">15,830.00</div><div class="ab" style="left:1059.6999999999998px;top:205.7px;width:66.40000000000009px;height:25.3px;background:#f1c47c"></div><div class="ab" style="left:1059.6999999999998px;top:232px;width:66.40000000000009px;height:25px;background:#f1c47c"></div><div class="t" style="left:1067.5px;top:214.2px;font-size:9.6px;color:#2b2f36">60</div><div class="t" style="left:1067.5px;top:240.2px;font-size:9.6px;color:#2b2f36">50</div><div class="ab" style="left:0;top:23px;width:278.40000000000003px;height:26px;background:#ffffff;border-top:1px solid #f3f5f8"></div><div class="ab" style="left:0;top:49px;width:278.40000000000003px;height:78px;background:#fafbfd;border-top:1px solid #f3f5f8"></div><div class="t" style="left:8.1px;top:58.2px;font-size:9.6px;color:#2b2f36">XSDD230827-09</div><div class="t" style="left:101.1px;top:58.2px;font-size:9.6px;color:#2b2f36">示例：杭州帆软-</div><div class="t" style="left:101.1px;top:73.2px;font-size:9.6px;color:#2b2f36">第1份销售订单</div><div class="t" style="left:195.1px;top:58.2px;font-size:9.6px;color:#2b2f36">示例：杭州帆软</div><div class="ab" style="left:0;top:127px;width:278.40000000000003px;height:78px;background:#ffffff;border-top:1px solid #f3f5f8"></div><div class="t" style="left:8.1px;top:136.2px;font-size:9.6px;color:#2b2f36">XSDD230827-08</div><div class="t" style="left:101.1px;top:136.2px;font-size:9.6px;color:#2b2f36">示例：无锡帆软-</div><div class="t" style="left:101.1px;top:151.2px;font-size:9.6px;color:#2b2f36">第1份销售订单</div><div class="t" style="left:195.1px;top:136.2px;font-size:9.6px;color:#2b2f36">示例：无锡帆软</div><div class="ab" style="left:0;top:205px;width:278.40000000000003px;height:52px;background:#fafbfd;border-top:1px solid #f3f5f8"></div><div class="t" style="left:8.1px;top:214.2px;font-size:9.6px;color:#2b2f36">XSDD230827-07</div><div class="t" style="left:101.1px;top:214.2px;font-size:9.6px;color:#2b2f36">示例：无锡简道</div><div class="t" style="left:101.1px;top:229.2px;font-size:9.6px;color:#2b2f36">云-第1份销售订单</div><div class="t" style="left:195.1px;top:214.2px;font-size:9.6px;color:#2b2f36">示例：无锡简道</div><div class="t" style="left:195.1px;top:229.2px;font-size:9.6px;color:#2b2f36">云</div><div class="ab" style="left:0;top:257px;width:278.40000000000003px;height:78px;background:#fafbfd;border-top:1px solid #f3f5f8"></div><div class="t" style="left:8.1px;top:266.2px;font-size:9.6px;color:#2b2f36">XSDD230827-06</div><div class="t" style="left:101.1px;top:266.2px;font-size:9.6px;color:#2b2f36">示例：杭州简道</div><div class="t" style="left:101.1px;top:281.2px;font-size:9.6px;color:#2b2f36">云-第1份销售订单</div><div class="t" style="left:195.1px;top:266.2px;font-size:9.6px;color:#2b2f36">示例：杭州简道</div><div class="t" style="left:195.1px;top:281.2px;font-size:9.6px;color:#2b2f36">云</div><div class="ab" style="left:92.6px;top:25px;width:1px;height:300px;background:#f3f5f8"></div><div class="ab" style="left:186.6px;top:25px;width:1px;height:300px;background:#f3f5f8"></div><div class="ab" style="left:277.9px;top:25px;width:1px;height:300px;background:#f3f5f8"></div><div class="ab" style="left:370.1px;top:25px;width:1px;height:300px;background:#f3f5f8"></div><div class="ab" style="left:428.9px;top:25px;width:1px;height:300px;background:#f3f5f8"></div><div class="ab" style="left:484.9px;top:25px;width:1px;height:300px;background:#f3f5f8"></div><div class="ab" style="left:573.1px;top:25px;width:1px;height:300px;background:#f3f5f8"></div><div class="ab" style="left:630.6px;top:25px;width:1px;height:300px;background:#f3f5f8"></div><div class="ab" style="left:719.6px;top:25px;width:1px;height:300px;background:#f3f5f8"></div><div class="ab" style="left:776.4px;top:25px;width:1px;height:300px;background:#f3f5f8"></div><div class="ab" style="left:843.6px;top:25px;width:1px;height:300px;background:#f3f5f8"></div><div class="ab" style="left:917.3px;top:25px;width:1px;height:300px;background:#f3f5f8"></div><div class="ab" style="left:992.1px;top:25px;width:1px;height:300px;background:#f3f5f8"></div><div class="ab" style="left:1058.7px;top:25px;width:1px;height:300px;background:#f3f5f8"></div><div class="ab" style="left:1125.6px;top:25px;width:1px;height:300px;background:#f3f5f8"></div><div class="ab" style="left:0;top:0;width:1170px;height:25px;background:#f4f8fd"></div><div class="ab" style="left:92.6px;top:0;width:1px;height:25px;background:#fff"></div><div class="t" style="left:8.3px;top:8.6px;font-size:9.6px;color:#3d8bf0">销售订单编号</div><div class="ab" style="left:186.6px;top:0;width:1px;height:25px;background:#fff"></div><div class="t" style="left:101.4px;top:8.6px;font-size:9.6px;color:#3d8bf0">销售订单名称</div><div class="ab" style="left:277.9px;top:0;width:1px;height:25px;background:#fff"></div><div class="t" style="left:195.4px;top:8.6px;font-size:9.6px;color:#3d8bf0">客户名称</div><div class="ab" style="left:370.1px;top:0;width:1px;height:25px;background:#fff"></div><div class="t" style="left:286.7px;top:8.6px;font-size:9.6px;color:#3d8bf0">产品名称</div><div class="ab" style="left:428.9px;top:0;width:1px;height:25px;background:#fff"></div><div class="t" style="left:378.9px;top:8.6px;font-size:9.6px;color:#3d8bf0">产品编号</div><div class="ab" style="left:484.9px;top:0;width:1px;height:25px;background:#fff"></div><div class="t" style="left:437.7px;top:8.6px;font-size:9.6px;color:#3d8bf0">销售数量</div><div class="ab" style="left:573.1px;top:0;width:1px;height:25px;background:#fff"></div><div class="t" style="left:493.7px;top:8.6px;font-size:9.6px;color:#3d8bf0">未出库-退货数量</div><div class="ab" style="left:630.6px;top:0;width:1px;height:25px;background:#fff"></div><div class="t" style="left:581.9px;top:8.6px;font-size:9.6px;color:#3d8bf0">出库数量</div><div class="ab" style="left:719.6px;top:0;width:1px;height:25px;background:#fff"></div><div class="t" style="left:639.4px;top:8.6px;font-size:9.6px;color:#3d8bf0">已出库-退货数量</div><div class="ab" style="left:776.4px;top:0;width:1px;height:25px;background:#fff"></div><div class="t" style="left:728.4px;top:8.6px;font-size:9.6px;color:#3d8bf0">换货数量</div><div class="ab" style="left:843.6px;top:0;width:1px;height:25px;background:#fff"></div><div class="t" style="left:785.2px;top:8.6px;font-size:9.6px;color:#3d8bf0">待出库数量</div><div class="ab" style="left:917.3px;top:0;width:1px;height:25px;background:#fff"></div><div class="t" style="left:852.4px;top:8.6px;font-size:9.6px;color:#3d8bf0">库存冻结数量</div><div class="ab" style="left:992.1px;top:0;width:1px;height:25px;background:#fff"></div><div class="t" style="left:926.1px;top:8.6px;font-size:9.6px;color:#3d8bf0">计划出库数量</div><div class="ab" style="left:1058.7px;top:0;width:1px;height:25px;background:#fff"></div><div class="t" style="left:1000.9px;top:8.6px;font-size:9.6px;color:#3d8bf0">已对账数量</div><div class="ab" style="left:1125.6px;top:0;width:1px;height:25px;background:#fff"></div><div class="t" style="left:1067.5px;top:8.6px;font-size:9.6px;color:#3d8bf0">待对账数量</div><div class="ab" style="left:1207.1px;top:0;width:1px;height:25px;background:#fff"></div><div class="t" style="left:1134.4px;top:8.6px;font-size:9.6px;color:#3d8bf0">应收金额</div></div><div class="ab" style="left:1180px;top:795px;width:14px;height:330px;background:#fff"></div><div class="ab" style="left:12.4px;top:1119.5px;width:1174.3px;height:34.5px;border:1px solid #f2f4f7;border-top:none;background:#fff"></div><div class="ab" style="left:1028.5px;top:1125.5px;width:23px;height:22.8px;border:1px solid #f0f2f6;border-radius:2px;text-align:center;line-height:22.5px;font-size:9.5px;color:#3a3f4a;">1</div><div class="t" style="left:1054.5px;top:1133.3px;font-size:9.5px;color:#3a3f4a">/ 1</div><div class="ab" style="left:1074.7px;top:1125.5px;width:22.5px;height:22.8px;border:1px solid #f0f2f6;border-radius:2px;text-align:center;line-height:22.5px;font-size:9.5px;color:#3a3f4a;"></div><div class="ab" style="left:1101.4px;top:1125.5px;width:46.8px;height:22.8px;border:1px solid #f0f2f6;border-radius:2px;text-align:center;line-height:22.5px;font-size:9.5px;color:#3a3f4a;"></div><div class="ab" style="left:1124.5px;top:1126px;width:1px;height:22px;background:#eef1f5"></div><div class="ab" style="left:1152px;top:1125.5px;width:23.2px;height:22.8px;border:1px solid #f0f2f6;border-radius:2px;text-align:center;line-height:22.5px;font-size:9.5px;color:#3a3f4a;"></div><svg class="ab" style="left:1070px;top:1128px" width="110" height="18" viewBox="1070 1128 110 18" fill="none" stroke="#3a3f4a" stroke-width="1.1"><path d="M1083.2 1133.6v7.2M1088 1133.6l-3.6 3.6 3.6 3.6"/><path d="M1114.4 1133.8l-3.4 3.4 3.4 3.4"/><path d="M1135.2 1133.8l3.4 3.4-3.4 3.4"/><path d="M1165.4 1133.6v7.2M1160.6 1133.6l3.6 3.6-3.6 3.6"/></svg>
</body></html>
